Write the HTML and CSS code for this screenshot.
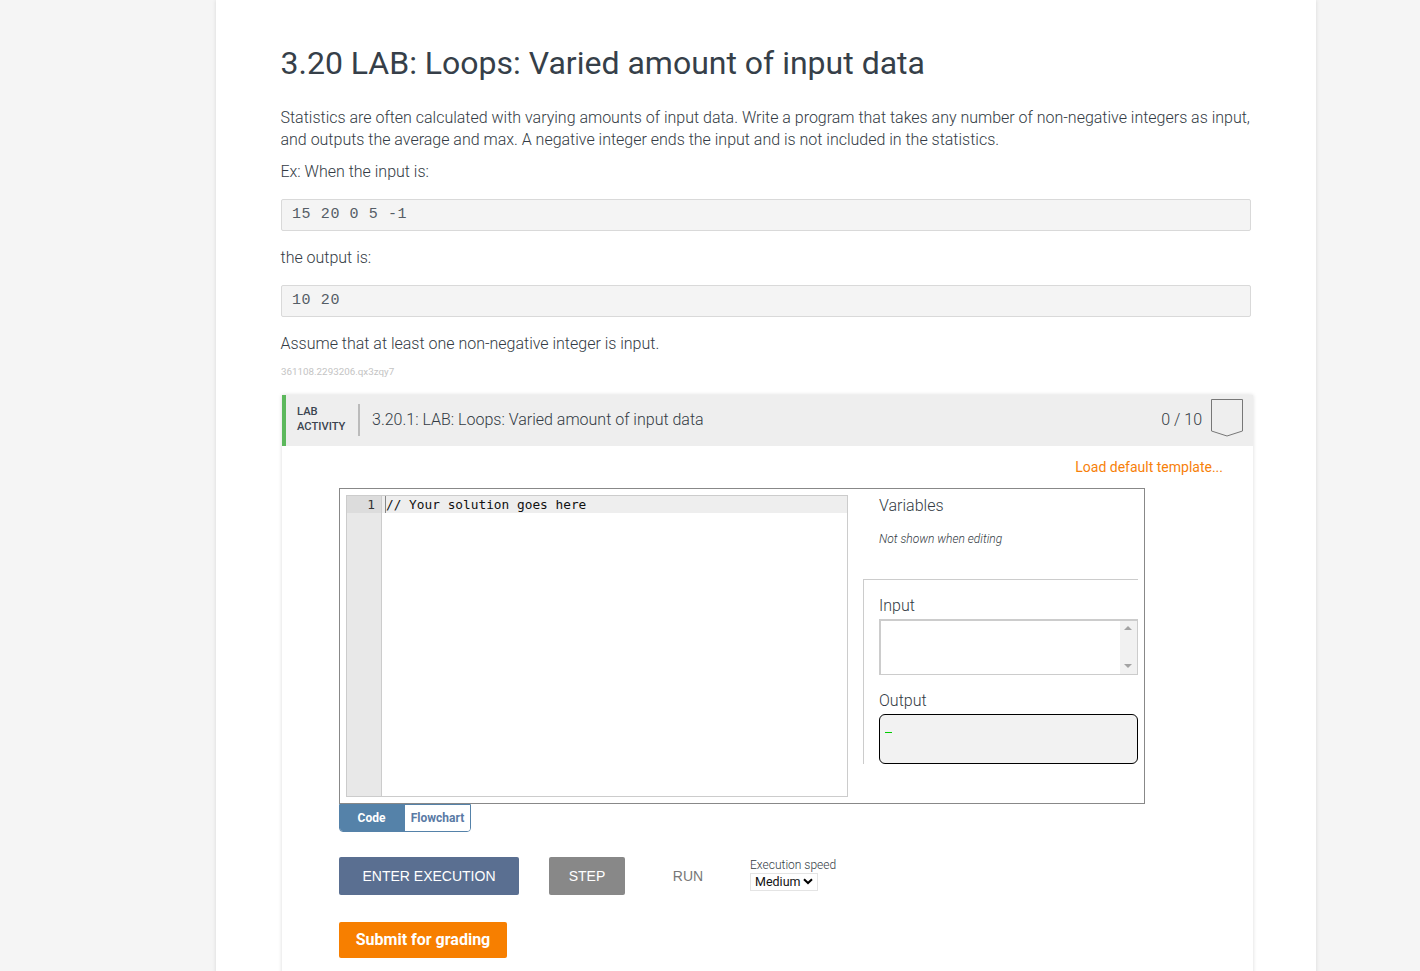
FILE: index.html
```html
<!DOCTYPE html>
<html lang="en">
<head>
<meta charset="utf-8">
<title>3.20 LAB: Loops: Varied amount of input data</title>
<link rel="stylesheet" href="styles.css">
</head>
<body>
<main class="page">
  <h1 class="title">3.20 LAB: Loops: Varied amount of input data</h1>
  <p class="para para-first">Statistics are often calculated with varying amounts of input data. Write a program that takes any number of non-negative integers as input, and outputs the average and max. A negative integer ends the input and is not included in the statistics.</p>
  <p class="para para-ex">Ex: When the input is:</p>
  <pre class="sample">15 20 0 5 -1</pre>
  <p class="para para-out">the output is:</p>
  <pre class="sample">10 20</pre>
  <p class="para para-out">Assume that at least one non-negative integer is input.</p>
  <div class="ident">361108.2293206.qx3zqy7</div>

  <section class="lab">
    <header class="lab-head">
      <div class="lab-type">LAB<br>ACTIVITY</div>
      <div class="lab-name">3.20.1: LAB: Loops: Varied amount of input data</div>
      <div class="lab-score">0 / 10</div>
      <svg class="chevron" width="33" height="38" viewBox="0 0 33 38"><path d="M1.5 .5H32.5V32L17 37L1.5 32Z" fill="none" stroke="#777" stroke-width="1"/></svg>
    </header>
    <div class="lab-body">
      <div class="template-row"><a class="template-link">Load default template...</a></div>
      <div class="workspace">
        <div class="editor">
          <div class="gutter"><div class="gutter-active">1</div></div>
          <div class="code"><div class="code-active">// Your solution goes here<span class="cursor"></span></div></div>
        </div>
        <div class="side">
          <div class="vars">
            <div class="side-label">Variables</div>
            <div class="vars-note">Not shown when editing</div>
          </div>
          <div class="io">
            <div class="side-label io-label">Input</div>
            <div class="input-box">
              <div class="scrollbar">
                <span class="arrow-up"></span>
                <span class="arrow-down"></span>
              </div>
            </div>
            <div class="side-label out-label">Output</div>
            <div class="output-box"><span class="term-cursor"></span></div>
          </div>
        </div>
      </div>
      <div class="tabs">
        <div class="tab tab-on">Code</div>
        <div class="tab tab-off">Flowchart</div>
      </div>
      <div class="controls">
        <button class="btn btn-enter">ENTER EXECUTION</button>
        <button class="btn btn-step">STEP</button>
        <button class="btn btn-run">RUN</button>
        <div class="speed">
          <div class="speed-label">Execution speed</div>
          <div class="speed-select">Medium<svg width="10" height="7" viewBox="0 0 10 7"><path d="M1 1.2L5 5L9 1.2" fill="none" stroke="#000" stroke-width="2"/></svg></div>
        </div>
      </div>
      <button class="submit">Submit for grading</button>
    </div>
  </section>
</main>
</body>
</html>
```
FILE: styles.css
```css
* { box-sizing: border-box; }
html, body { margin: 0; height: 971px; overflow: hidden; }
body { background: #f5f5f5; font-family: Roboto, "Liberation Sans", sans-serif; color: #3f4a55; }
.page { margin-left: 216px; width: 1100px; min-height: 1200px; background: #fff; padding: 0 65px; box-shadow: 0 0 4px rgba(0,0,0,.12); }
.title { margin: 0 0 0 -.5px; padding-top: 44px; height: 101px; font-size: 32px; line-height: 38px; font-weight: 400; color: #363f49; }
.para { margin: 0 0 0 -.5px; font-size: 16px; line-height: 22px; font-weight: 300; color: #333b44; width: 971px; letter-spacing: -.008px; }
.para-first { margin-top: 6px; }
.para-ex { margin-top: 10px; }
.para-out { margin-top: 16px; }
.sample { margin: 16px 0 0; width: 970px; height: 32px; padding: 0 10px; background: #f4f4f4; border: 1px solid #d9d9d9; border-radius: 2px; font-family: "Liberation Mono", monospace; font-size: 15px; letter-spacing: .6px; font-weight: 400; line-height: 30px; color: #555d66; }
.ident { margin-top: 10px; height: 15px; font-size: 9.8px; line-height: 14px; color: #c4c4c4; }
.lab { margin: 15px 0 0 1px; width: 971px; min-height: 700px; background: #fff; box-shadow: 0 0 4px rgba(0,0,0,.15); }
.lab-head { display: flex; align-items: center; height: 51px; background: #eee; border-left: 4px solid #5cb85c; padding-left: 11px; }
.lab-type { align-self: flex-start; margin-top: 9px; width: 63px; height: 32px; border-right: 2px solid #bbb; font-size: 11.2px; line-height: 15px; font-weight: 500; color: #3b4450; }
.lab-name { margin: 0 0 2px 12px; flex: 1; font-size: 16px; font-weight: 300; color: #333b44; }
.lab-score { font-size: 16px; font-weight: 300; color: #333b44; margin: 0 8px 2px 0; }
.chevron { align-self: flex-start; margin: 4px 10px 0 0; flex: none; }
.lab-body { padding: 0 0 0 57px; }
.template-row { height: 42px; padding: 13px 30px 0 0; text-align: right; font-size: 14px; line-height: 16px; }
.template-link { color: #f77f0a; font-weight: 400; }
.workspace { display: flex; width: 806px; height: 316px; border: 1px solid #888; padding: 6px; }
.editor { display: flex; width: 502px; height: 302px; border: 1px solid #ccc; flex: none; }
.gutter { width: 35px; background: #e8e8e8; border-right: 1px solid #ccc; flex: none; }
.gutter-active { height: 17px; background: #dcdcdc; text-align: right; padding-right: 6px; font-family: "DejaVu Sans Mono", monospace; font-size: 12.8px; line-height: 17px; color: #333; }
.code { flex: 1; }
.code-active { position: relative; height: 17px; background: #eee; padding-left: 4px; font-family: "DejaVu Sans Mono", monospace; font-size: 12.8px; line-height: 17px; color: #111; white-space: pre; }
.cursor { position: absolute; left: 3px; top: 0; width: 1px; height: 17px; background: #888; }
.side { flex: 1; padding-left: 15px; }
.vars { height: 84px; padding-left: 16px; }
.side-label { font-size: 16px; line-height: 20px; font-weight: 300; color: #333b44; }
.vars .side-label { padding-top: 1px; height: 35px; line-height: 20px; }
.vars-note { font-size: 12px; line-height: 16px; font-style: italic; font-weight: 300; color: #333b44; padding-top: 1px; }
.io { height: 185px; border-top: 1px solid #ccc; border-left: 1px solid #ccc; padding-left: 15px; }
.io-label { margin-top: 16px; }
.input-box { display: flex; justify-content: flex-end; height: 56px; margin-top: 3px; border: 1px solid #ccc; border-left-width: 2px; border-top-width: 2px; }
.scrollbar { position: relative; width: 17px; background: #f1f1f1; }
.arrow-up, .arrow-down { position: absolute; left: 4px; width: 0; height: 0; border-left: 4px solid transparent; border-right: 4px solid transparent; }
.arrow-up { top: 5px; border-bottom: 4px solid #a3a3a3; }
.arrow-down { bottom: 6px; border-top: 4px solid #a3a3a3; }
.out-label { margin-top: 16px; }
.output-box { height: 50px; margin-top: 3px; background: #f2f2f2; border: 1px solid #000; border-radius: 6px; position: relative; }
.term-cursor { position: absolute; left: 5px; top: 17px; width: 7px; height: 1px; background: #0c0; }
.tabs { display: flex; width: 132px; height: 28px; border: 1px solid #5582a9; border-radius: 0 0 4px 4px; overflow: hidden; font-size: 12px; font-weight: 700; }
.tab { display: flex; align-items: center; justify-content: center; }
.tab-on { width: 65px; padding-right: 2px; background: #5582a9; color: #fff; }
.tab-off { flex: 1; background: #fff; color: #5a7aa5; }
.controls { display: flex; align-items: flex-start; height: 38px; margin-top: 25px; }
.btn { height: 38px; border: 0; border-radius: 2px; font-family: "Liberation Sans", Arial, sans-serif; font-size: 14px; font-weight: 400; padding: 0; }
.btn-enter { width: 180px; background: #5a6f91; color: #fff; }
.btn-step { width: 76px; margin-left: 30px; background: #888; color: #fff; }
.btn-run { width: 78px; margin-left: 24px; background: transparent; color: #777; }
.speed { margin-left: 23px; }
.speed-label { height: 16px; font-size: 12px; line-height: 16px; font-weight: 300; color: #333b44; }
.speed-select { display: flex; align-items: center; justify-content: space-between; width: 68px; height: 18px; padding: 0 4px 1px; border: 1px solid #e4e4e4; font-size: 12.5px; color: #111; }
.submit { display: block; margin-top: 27px; width: 168px; height: 36px; border: 0; border-radius: 2px; background: #f77f00; color: #fff; font-family: Roboto, sans-serif; font-size: 16px; font-weight: 700; padding: 0 0 2px; }
```
